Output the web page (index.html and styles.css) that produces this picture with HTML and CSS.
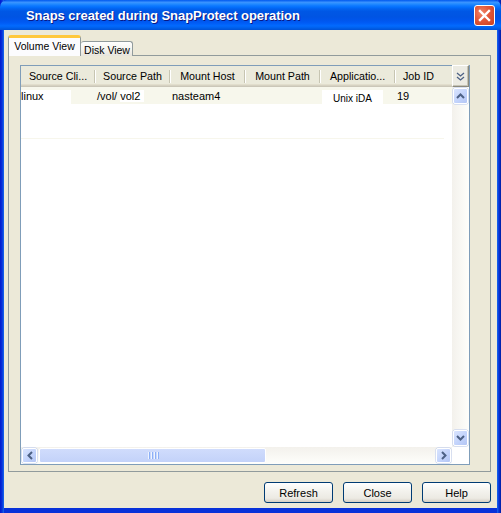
FILE: index.html
```html
<!DOCTYPE html>
<html>
<head>
<meta charset="utf-8">
<link rel="stylesheet" href="styles.css">
</head>
<body>
<div class="window">
  <div class="titlebar">
    <span class="title">Snaps created during SnapProtect operation</span>
    <div class="close">
      <svg width="13" height="13" viewBox="0 0 13 13"><path d="M2 2 L11 11 M11 2 L2 11" stroke="#fff" stroke-width="2.4" stroke-linecap="square"/></svg>
    </div>
  </div>
  <div class="client">
    <div class="tabs">
      <div class="tab active">Volume View</div>
      <div class="tab">Disk View</div>
    </div>
    <div class="panel">
      <div class="table">
        <div class="header">
          <div class="hcell c1">Source Cli...</div>
          <div class="hcell c2">Source Path</div>
          <div class="hcell c3">Mount Host</div>
          <div class="hcell c4">Mount Path</div>
          <div class="hcell c5">Applicatio...</div>
          <div class="hcell c6 last">Job ID</div>
        </div>
        <div class="corner-btn">
          <svg width="9" height="9" viewBox="0 0 9 9"><path d="M1 1 L4.5 4 L8 1 M1 5 L4.5 8 L8 5" fill="none" stroke="#4D6185" stroke-width="1.3"/></svg>
        </div>
        <div class="body">
          <div class="row tinted">
            <div class="cell c1"><span class="w1">linux</span></div>
            <div class="cell c2">/vol/ <span class="w2">vol2</span></div>
            <div class="cell c3">nasteam4</div>
            <div class="cell c4"></div>
            <div class="cell c5"><span class="w3">Unix iDA</span></div>
            <div class="cell c6">19</div>
          </div>
          <div class="row"></div>
          <div class="row"></div>
          <div class="stripe"></div>
        </div>
        <div class="vscroll">
          <div class="sbtn">
            <svg width="9" height="6" viewBox="0 0 9 6"><path d="M1 5 L4.5 1.5 L8 5" fill="none" stroke="#4D6185" stroke-width="2"/></svg>
          </div>
          <div class="vtrack"></div>
          <div class="sbtn">
            <svg width="9" height="6" viewBox="0 0 9 6"><path d="M1 1 L4.5 4.5 L8 1" fill="none" stroke="#4D6185" stroke-width="2"/></svg>
          </div>
        </div>
        <div class="hscroll">
          <div class="sbtn">
            <svg width="6" height="9" viewBox="0 0 6 9"><path d="M5 1 L1.5 4.5 L5 8" fill="none" stroke="#4D6185" stroke-width="2"/></svg>
          </div>
          <div class="thumb"><div class="grip"><i></i><i></i><i></i><i></i></div></div>
          <div class="htrack"></div>
          <div class="sbtn">
            <svg width="6" height="9" viewBox="0 0 6 9"><path d="M1 1 L4.5 4.5 L1 8" fill="none" stroke="#4D6185" stroke-width="2"/></svg>
          </div>
        </div>
        <div class="corner"></div>
      </div>
    </div>
    <div class="buttons">
      <div class="btn">Refresh</div>
      <div class="btn">Close</div>
      <div class="btn">Help</div>
    </div>
  </div>
</div>
</body>
</html>
```

FILE: styles.css
```css
html, body {
  margin: 0;
  padding: 0;
  background: #0831D9;
}
.window {
  width: 501px;
  height: 513px;
  display: flex;
  flex-direction: column;
  background: linear-gradient(to right, #0019CF 0, #0831D9 2px, #166AEE 4px) left/4px 100% no-repeat,
              linear-gradient(to left, #001EA0 0, #0831D9 2px, #166AEE 4px) right/4px 100% no-repeat,
              #0831D9;
  font-family: "Liberation Sans", Arial, sans-serif;
  font-size: 11px;
  color: #000;
}
.titlebar {
  height: 30px;
  flex: none;
  display: flex;
  align-items: center;
  padding-left: 26px;
  border-radius: 7px 7px 0 0;
  background: linear-gradient(to bottom, #0058EE 0%, #3A93FF 8%, #288EFF 12%, #127DFF 18%, #036FFC 24%, #0262EE 30%, #0057E5 38%, #0054E3 56%, #0055EB 66%, #005BF5 76%, #026AFE 86%, #0062EF 92%, #0052D6 100%);
}
.title {
  color: #fff;
  font-weight: bold;
  font-size: 13px;
  letter-spacing: -0.05px;
  text-shadow: 1px 1px 0 #0A1883;
  padding-top: 1px;
}
.close {
  margin-left: auto;
  margin-right: 6px;
  margin-top: 1px;
  width: 19px;
  height: 19px;
  border: 1px solid #fff;
  border-radius: 3px;
  background: radial-gradient(circle at 35% 35%, #F0866A 0%, #E2573A 45%, #C9401E 100%);
  display: flex;
  align-items: center;
  justify-content: center;
}
.client {
  flex: 1;
  margin: 0 4px 5px 4px;
  background: #ECE9D8;
  padding-top: 5px;
  display: flex;
  flex-direction: column;
}
.tabs {
  display: flex;
  align-items: flex-end;
  height: 21px;
  margin-left: 4px;
  position: relative;
  z-index: 1;
  margin-bottom: -1px;
}
.tab {
  box-sizing: border-box;
  border: 1px solid #919B9C;
  border-bottom: none;
  border-radius: 3px 3px 0 0;
  text-align: center;
  font-size: 10.5px;
}
.tab.active {
  width: 73px;
  height: 21px;
  background: #FCFCFE;
  border-top: 3px solid #FFC83C;
  padding-top: 2px;
}
.tab:not(.active) {
  width: 52px;
  height: 15px;
  background: linear-gradient(to bottom, #FFFFFF, #F3F2EC 60%, #E6E4DB);
  padding-top: 2px;
  padding-left: 1px;
  border-left: none;
}
.panel {
  margin-left: 4px;
  width: 483px;
  height: 417px;
  box-sizing: border-box;
  border: 1px solid #919B9C;
  background: #ECE9D8;
  padding: 9px 0 0 11px;
}
.table {
  width: 450px;
  height: 400px;
  box-sizing: border-box;
  border: 1px solid #7F9DB9;
  background: #fff;
  display: grid;
  grid-template-columns: 431px 17px;
  grid-template-rows: 21px 360px 17px;
}
.header {
  display: flex;
  background: #EBEADB;
  box-shadow: inset 0 -1px 0 #CBC7B8, inset 0 -2px 0 #D6D2C2, inset 0 -3px 0 #E2DECD;
  overflow: hidden;
}
.hcell {
  flex: none;
  box-sizing: border-box;
  display: flex;
  align-items: center;
  justify-content: center;
  padding-bottom: 2px;
  position: relative;
  white-space: nowrap;
  font-size: 10.7px;
}
.hcell::after {
  content: "";
  position: absolute;
  right: 0;
  top: 4px;
  height: 13px;
  width: 1px;
  background: #C7C5B2;
  box-shadow: 1px 0 0 #fff;
}
.hcell.last::after { display: none; }
.c1 { width: 74px; }
.c2 { width: 75px; }
.c3 { width: 75px; }
.c4 { width: 75px; }
.c5 { width: 75px; }
.c6 { width: 57px; }
.hcell.c6 { justify-content: flex-start; padding-left: 8px; }
.corner-btn {
  margin-top: -1px;
  box-sizing: border-box;
  border: 1px solid;
  border-color: #fff #8C8A7D #8C8A7D #fff;
  background: #ECEBE3;
  box-shadow: inset -1px -1px 0 #C6C4B6;
  display: flex;
  align-items: center;
  justify-content: center;
}
.body {
  position: relative;
  background: #fff;
  overflow: hidden;
}
.row {
  display: flex;
  height: 17px;
}
.row.tinted {
  background: #F7F7EC;
}
.cell {
  flex: none;
  box-sizing: border-box;
  padding-left: 2px;
  padding-top: 3px;
  white-space: nowrap;
}
.cell.c1 { padding-left: 0; }
.w1 {
  display: inline-block;
  background: #fff;
  width: 50px;
  height: 14px;
}
.w2 { background: #fff; padding-right: 4px; }
.w3 {
  display: inline-block;
  background: #fff;
  font-size: 10px;
  padding: 3px 11px 0 11px;
  height: 11px;
}
.stripe {
  height: 1px;
  background: #F7F6EC;
  width: 423px;
}
.vscroll {
  display: flex;
  flex-direction: column;
  background: linear-gradient(to right, #F3F1EC, #FEFEFB);
}
.sbtn {
  flex: none;
  box-sizing: border-box;
  width: 15px;
  height: 15px;
  margin: 1px;
  border: 1px solid #fff;
  border-radius: 2px;
  background: linear-gradient(135deg, #D9E4FE, #C1D2FB 60%, #B4C6F4);
  box-shadow: 0 0 0 0.5px #B7C8EE;
  display: flex;
  align-items: center;
  justify-content: center;
}
.vscroll .sbtn { height: 16px; }
.vtrack { flex: 1; }
.hscroll {
  display: flex;
  align-items: center;
  background: linear-gradient(to bottom, #F3F1EC, #FEFEFB);
}
.thumb {
  box-sizing: border-box;
  width: 227px;
  height: 15px;
  margin-left: 1px;
  border: 1px solid #fff;
  border-radius: 2px;
  background: linear-gradient(to bottom, #D0DCFC, #C3D2F9);
  display: flex;
  align-items: center;
  justify-content: center;
}
.grip { display: flex; gap: 1px; padding-left: 2px; }
.grip i {
  display: block;
  width: 1px;
  height: 7px;
  background: #EEF4FE;
  box-shadow: 1px 0 0 #8CB0F8;
  margin-right: 1px;
}
.htrack { flex: 1; }
.corner { background: #fff; }
.buttons {
  display: flex;
  justify-content: flex-end;
  gap: 10px;
  margin-top: 10px;
  margin-right: 6px;
}
.btn {
  box-sizing: border-box;
  width: 69px;
  height: 21px;
  border: 1px solid #003C74;
  border-radius: 3px;
  background: linear-gradient(to bottom, #FFFFFF 0%, #F4F3EE 40%, #ECEAE3 80%, #D6D0C5 100%);
  display: flex;
  align-items: center;
  justify-content: center;
  font-size: 11px;
}
```
